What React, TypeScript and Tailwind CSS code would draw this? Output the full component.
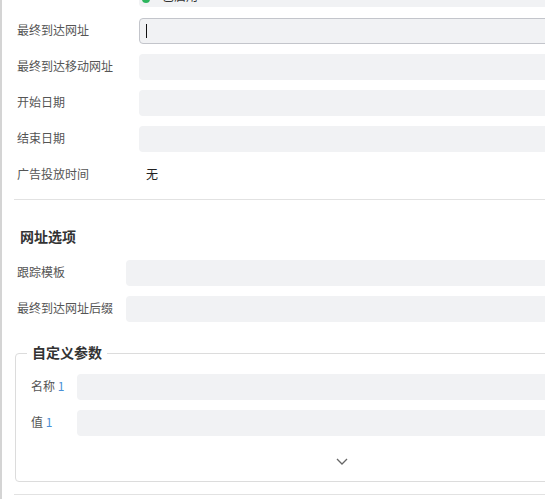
import React from 'react';

const fieldBg = 'bg-[#f1f2f4]';

interface RowProps {
  label: React.ReactNode;
  labelWidth: string;
  children?: React.ReactNode;
}

// label on the left, control filling the rest of the line
const FormRow: React.FC<RowProps> = ({ label, labelWidth, children }) => (
  <div className="flex items-center h-[26px]">
    <div className={`${labelWidth} shrink-0 pb-[2px] text-[12px] text-[#555] whitespace-nowrap`}>{label}</div>
    <div className="flex-1 h-full">{children}</div>
  </div>
);

const Field: React.FC<{ focused?: boolean }> = ({ focused }) => (
  <div
    className={`h-full rounded-[4px] ${fieldBg} ${
      focused ? 'border border-[#c3c5cb] flex items-center pl-[6px]' : ''
    }`}
  >
    {focused && <span className="block w-px h-[14px] bg-[#111]" />}
  </div>
);

const Divider = () => <div className="h-px bg-[#e2e2e2]" />;

const App: React.FC = () => {
  return (
    <div
      className="h-[499px] overflow-hidden bg-white border-l-2 border-[#d4d4d4]"
      style={{ fontFamily: '"Noto Sans CJK SC", "Noto Sans", sans-serif' }}
    >
      <div className="w-[656px] ml-[12px]">
        {/* status select, mostly scrolled out above */}
        <div className="flex">
          <div className="w-[125px] shrink-0" />
          <div className={`flex-1 h-[26px] mt-[-19px] pt-[4px] rounded-[4px] ${fieldBg} flex items-center pl-[3px] gap-[12px] text-[12px] text-[#333]`}>
            <span className="w-[8px] h-[8px] mt-[5px] rounded-full bg-[#2db55d]" />
            <span>已启用</span>
          </div>
        </div>

        <div className="flex flex-col gap-[10px] mt-[11px] pl-[3px]">
          <FormRow label="最终到达网址" labelWidth="w-[122px]">
            <Field focused />
          </FormRow>
          <FormRow label="最终到达移动网址" labelWidth="w-[122px]">
            <Field />
          </FormRow>
          <FormRow label="开始日期" labelWidth="w-[122px]">
            <Field />
          </FormRow>
          <FormRow label="结束日期" labelWidth="w-[122px]">
            <Field />
          </FormRow>
          <FormRow label="广告投放时间" labelWidth="w-[122px]">
            <div className="h-full flex items-center pb-[2px] pl-[7px] text-[12px] text-[#222]">无</div>
          </FormRow>
        </div>

        <div className="mt-[11px]">
          <Divider />
        </div>

        <h3 className="mt-[28px] pl-[6px] h-[20px] leading-[17px] text-[14px] font-bold text-[#333]">网址选项</h3>

        <div className="flex flex-col gap-[10px] mt-[12px] pl-[3px]">
          <FormRow label="跟踪模板" labelWidth="w-[109px]">
            <Field />
          </FormRow>
          <FormRow label="最终到达网址后缀" labelWidth="w-[109px]">
            <Field />
          </FormRow>
        </div>

        <fieldset className="mt-[21px] mx-px border border-[#dcdcdc] rounded-[4px] p-0">
          <legend className="ml-[11px] px-[5px] h-[20px] leading-[18px] text-[14px] font-bold text-[#333]">
            自定义参数
          </legend>
          <div className="pt-[11px] pl-[15px] flex flex-col gap-[10px]">
            <FormRow
              label={
                <>
                  名称 <span className="text-[#4a8fd6]">1</span>
                </>
              }
              labelWidth="w-[46px]"
            >
              <Field />
            </FormRow>
            <FormRow
              label={
                <>
                  值 <span className="text-[#4a8fd6]">1</span>
                </>
              }
              labelWidth="w-[46px]"
            >
              <Field />
            </FormRow>
          </div>
          <div className="mt-[13px] mb-[8px] h-[24px] flex items-center justify-center">
            <svg width="12" height="7" viewBox="0 0 12 7" fill="none">
              <path d="M1 1l5 5 5-5" stroke="#666" strokeWidth="1.3" />
            </svg>
          </div>
        </fieldset>

        <div className="mt-[12px]">
          <Divider />
        </div>
      </div>
    </div>
  );
};

export default App;
